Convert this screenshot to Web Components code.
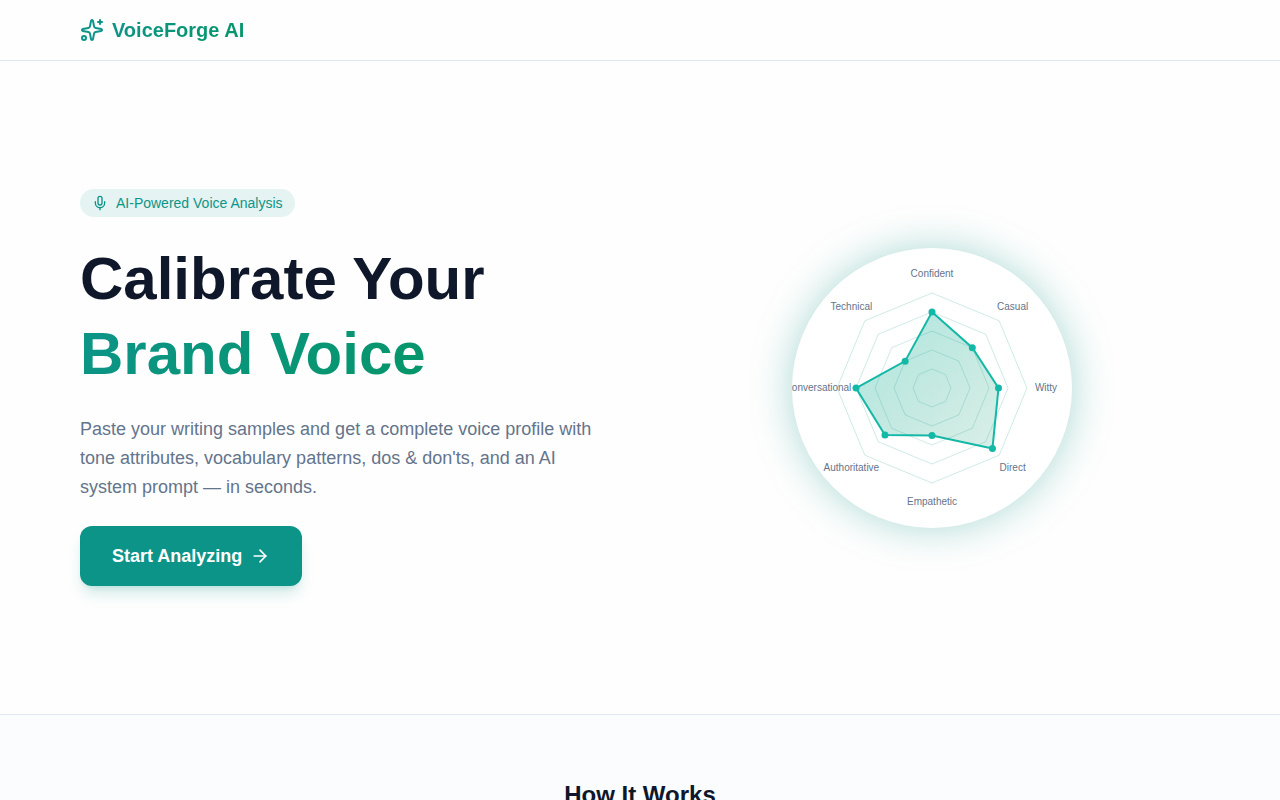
<!DOCTYPE html>
<html lang="en">
<head>
<meta charset="utf-8">
<meta name="viewport" content="width=device-width, initial-scale=1">
<title>VoiceForge AI</title>
<style>
    :root {
        --vf-primary: #0d9488;
        --vf-accent: #059669;
        --vf-chart: #14b8a6;
        --vf-text: #0f172a;
        --vf-muted: #64748b;
        --vf-border: #e2e8f0;
        --vf-bg: #fefefe;
        --vf-bg-soft: #fbfcfe;
        --vf-gradient: linear-gradient(135deg, var(--vf-primary), var(--vf-accent));
    }

    body {
        margin: 0;
        background: var(--vf-bg);
        color: var(--vf-text);
        font-family: "Liberation Sans", Arial, sans-serif;
        font-size: 16px;
        line-height: 24px;
        -webkit-font-smoothing: antialiased;
    }
</style>
</head>
<body>
<vf-header>VoiceForge AI</vf-header>
<main>
    <vf-hero>
        <vf-badge slot="badge">AI-Powered Voice Analysis</vf-badge>
        <span slot="title">Calibrate Your</span>
        <span slot="highlight">Brand Voice</span>
        <span slot="text">Paste your writing samples and get a complete voice profile with tone attributes, vocabulary patterns, dos &amp; don'ts, and an AI system prompt — in seconds.</span>
        <vf-button slot="action">Start Analyzing</vf-button>
        <vf-radar
            slot="visual"
            labels="Confident,Casual,Witty,Direct,Empathetic,Authoritative,Conversational,Technical"
            values="80,60,70,90,50,70,80,40"
        ></vf-radar>
    </vf-hero>
    <vf-section>How It Works</vf-section>
</main>

<script>
const ICONS = {
    sparkles: `
        <path d="M11.017 2.814a1 1 0 0 1 1.966 0l1.051 5.558a2 2 0 0 0 1.594 1.594l5.558 1.051a1 1 0 0 1 0 1.966l-5.558 1.051a2 2 0 0 0-1.594 1.594l-1.051 5.558a1 1 0 0 1-1.966 0l-1.051-5.558a2 2 0 0 0-1.594-1.594l-5.558-1.051a1 1 0 0 1 0-1.966l5.558-1.051a2 2 0 0 0 1.594-1.594z"/>
        <path d="M20 2v4"/>
        <path d="M22 4h-4"/>
        <circle cx="4" cy="20" r="2"/>
    `,
    mic: `
        <path d="M12 19v3"/>
        <path d="M19 10v2a7 7 0 0 1-14 0v-2"/>
        <rect x="9" y="2" width="6" height="13" rx="3"/>
    `,
    arrow: `
        <path d="M5 12h14"/>
        <path d="m12 5 7 7-7 7"/>
    `,
}

class VfIcon extends HTMLElement {
    constructor() {
        super()
        this.attachShadow({ mode: 'open' })
    }

    connectedCallback() {
        const size = this.getAttribute('size') || 24

        this.shadowRoot.innerHTML = `
            <style>
                :host {
                    display: block;
                    flex: none;
                }

                svg {
                    display: block;
                }
            </style>
            <svg width="${size}" height="${size}" viewBox="0 0 24 24" fill="none"
                stroke="currentColor" stroke-width="2" stroke-linecap="round"
                stroke-linejoin="round" aria-hidden="true">
                ${ICONS[this.getAttribute('name')]}
            </svg>
        `
    }
}

class VfHeader extends HTMLElement {
    constructor() {
        super()
        this.attachShadow({ mode: 'open' })
    }

    connectedCallback() {
        this.shadowRoot.innerHTML = `
            <style>
                :host {
                    display: block;
                    border-bottom: 1px solid var(--vf-border);
                }

                header {
                    display: flex;
                    max-width: 1120px;
                    margin: 0 auto;
                    padding: 16px 24px;
                }

                a {
                    display: flex;
                    align-items: center;
                    gap: 8px;
                    color: var(--vf-primary);
                    font-size: 20px;
                    font-weight: 700;
                    line-height: 28px;
                    text-decoration: none;
                }

                span {
                    background: var(--vf-gradient);
                    -webkit-background-clip: text;
                    background-clip: text;
                    color: transparent;
                }
            </style>
            <header>
                <a href="#">
                    <vf-icon name="sparkles" size="24"></vf-icon>
                    <span><slot></slot></span>
                </a>
            </header>
        `
    }
}

class VfBadge extends HTMLElement {
    constructor() {
        super()
        this.attachShadow({ mode: 'open' })
    }

    connectedCallback() {
        this.shadowRoot.innerHTML = `
            <style>
                :host {
                    display: inline-flex;
                    align-items: center;
                    gap: 8px;
                    padding: 4px 12px;
                    border-radius: 14px;
                    background: rgba(13, 148, 136, 0.1);
                    color: var(--vf-primary);
                    font-size: 14px;
                    line-height: 20px;
                }
            </style>
            <vf-icon name="mic" size="16"></vf-icon>
            <slot></slot>
        `
    }
}

class VfButton extends HTMLElement {
    constructor() {
        super()
        this.attachShadow({ mode: 'open' })
    }

    connectedCallback() {
        this.shadowRoot.innerHTML = `
            <style>
                :host {
                    display: inline-block;
                }

                button {
                    display: flex;
                    align-items: center;
                    gap: 8px;
                    padding: 16px 32px;
                    border: none;
                    border-radius: 12px;
                    background: var(--vf-primary);
                    box-shadow:
                        0 10px 15px -3px rgba(13, 148, 136, 0.2),
                        0 4px 6px -4px rgba(13, 148, 136, 0.2);
                    color: #fff;
                    font-family: inherit;
                    font-size: 18px;
                    font-weight: 600;
                    line-height: 28px;
                    cursor: pointer;
                }

                button:hover {
                    background: #0f766e;
                }
            </style>
            <button type="button">
                <slot></slot>
                <vf-icon name="arrow" size="20"></vf-icon>
            </button>
        `
    }
}

class VfRadar extends HTMLElement {
    constructor() {
        super()
        this.attachShadow({ mode: 'open' })
        this.center = 140
        this.radius = 95
        this.labelRadius = 114
    }

    connectedCallback() {
        this.labels = this.getAttribute('labels').split(',')
        this.values = this.getAttribute('values').split(',').map(Number)
        this.render()
    }

    // first axis points up, the rest go clockwise
    point(index, radius) {
        const angle = (index / this.labels.length) * Math.PI * 2 - Math.PI / 2
        const x = this.center + Math.cos(angle) * radius
        const y = this.center + Math.sin(angle) * radius

        return [x.toFixed(2), y.toFixed(2)]
    }

    render() {
        const rings = [0.2, 0.4, 0.6, 0.8, 1]
            .map((step) => {
                const points = this.labels.map((_, i) =>
                    this.point(i, this.radius * step)
                )
                return `<polygon class="ring" points="${points.join(' ')}"/>`
            })
            .join('')

        const shape = this.values.map((value, i) =>
            this.point(i, (this.radius * value) / 100)
        )

        const dots = shape
            .map(([x, y]) => `<circle class="dot" cx="${x}" cy="${y}" r="3.5"/>`)
            .join('')

        const labels = this.labels
            .map((label, i) => {
                const [x, y] = this.point(i, this.labelRadius)
                return `<text x="${x}" y="${y}">${label}</text>`
            })
            .join('')

        this.shadowRoot.innerHTML = `
            <style>
                :host {
                    display: block;
                    border-radius: 50%;
                    background: #fff;
                    box-shadow: 0 0 40px rgba(13, 148, 136, 0.35);
                }

                svg {
                    display: block;
                    overflow: hidden;
                }

                .ring {
                    fill: none;
                    stroke: var(--vf-primary);
                    stroke-opacity: 0.2;
                }

                .shape {
                    fill: url(#fill);
                    stroke: var(--vf-chart);
                    stroke-width: 2;
                }

                .dot {
                    fill: var(--vf-chart);
                }

                text {
                    fill: var(--vf-muted);
                    font-size: 10px;
                    text-anchor: middle;
                    dominant-baseline: middle;
                }
            </style>
            <svg width="280" height="280" viewBox="0 0 280 280" role="img" aria-label="Voice profile">
                <defs>
                    <linearGradient id="fill" x1="0" y1="0" x2="1" y2="1">
                        <stop offset="0" stop-color="#14b8a6" stop-opacity="0.35"/>
                        <stop offset="1" stop-color="#059669" stop-opacity="0.15"/>
                    </linearGradient>
                </defs>
                ${rings}
                <polygon class="shape" points="${shape.join(' ')}"/>
                ${dots}
                ${labels}
            </svg>
        `
    }
}

class VfHero extends HTMLElement {
    constructor() {
        super()
        this.attachShadow({ mode: 'open' })
    }

    connectedCallback() {
        this.shadowRoot.innerHTML = `
            <style>
                :host {
                    display: block;
                }

                .hero {
                    display: grid;
                    grid-template-columns: 1fr 1fr;
                    align-items: center;
                    gap: 48px;
                    max-width: 1120px;
                    margin: 0 auto;
                    padding: 128px 24px;
                }

                .copy {
                    display: flex;
                    flex-direction: column;
                    align-items: flex-start;
                    gap: 24px;
                }

                h1 {
                    margin: 0;
                    font-size: 60px;
                    font-weight: 700;
                    line-height: 75px;
                }

                .line {
                    display: block;
                }

                .highlight {
                    display: inline-block;
                    background: var(--vf-gradient);
                    -webkit-background-clip: text;
                    background-clip: text;
                    color: transparent;
                }

                p {
                    margin: 0;
                    max-width: 576px;
                    color: var(--vf-muted);
                    font-size: 18px;
                    line-height: 29px;
                }

                .visual {
                    display: flex;
                    justify-content: center;
                }

                @media (max-width: 900px) {
                    .hero {
                        grid-template-columns: 1fr;
                        padding: 64px 24px;
                    }

                    h1 {
                        font-size: 40px;
                        line-height: 50px;
                    }
                }
            </style>
            <section class="hero">
                <div class="copy">
                    <slot name="badge"></slot>
                    <h1>
                        <span class="line"><slot name="title"></slot></span>
                        <span class="highlight"><slot name="highlight"></slot></span>
                    </h1>
                    <p><slot name="text"></slot></p>
                    <slot name="action"></slot>
                </div>
                <div class="visual">
                    <slot name="visual"></slot>
                </div>
            </section>
        `
    }
}

class VfSection extends HTMLElement {
    constructor() {
        super()
        this.attachShadow({ mode: 'open' })
    }

    connectedCallback() {
        this.shadowRoot.innerHTML = `
            <style>
                :host {
                    display: block;
                    border-top: 1px solid var(--vf-border);
                    background: var(--vf-bg-soft);
                }

                section {
                    max-width: 1120px;
                    margin: 0 auto;
                    padding: 64px 24px;
                }

                h2 {
                    margin: 0;
                    font-size: 24px;
                    font-weight: 700;
                    line-height: 32px;
                    text-align: center;
                }
            </style>
            <section>
                <h2><slot></slot></h2>
            </section>
        `
    }
}

customElements.define('vf-icon', VfIcon)
customElements.define('vf-header', VfHeader)
customElements.define('vf-badge', VfBadge)
customElements.define('vf-button', VfButton)
customElements.define('vf-radar', VfRadar)
customElements.define('vf-hero', VfHero)
customElements.define('vf-section', VfSection)
</script>
</body>
</html>
